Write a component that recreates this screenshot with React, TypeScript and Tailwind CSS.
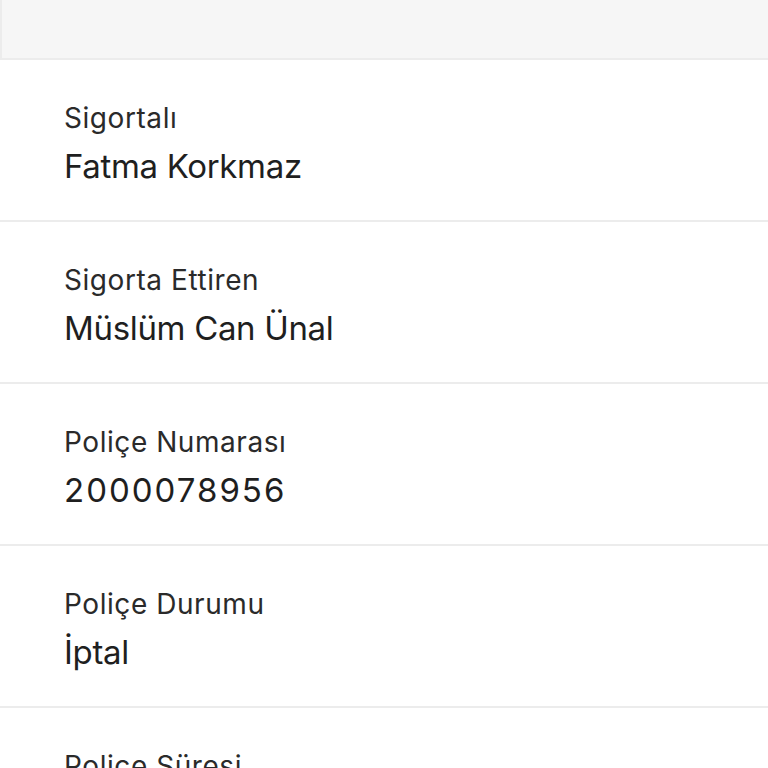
const rows = [
  { label: "Sigortalı", value: "Fatma Korkmaz", digits: false },
  { label: "Sigorta Ettiren", value: "Müslüm Can Ünal", digits: false },
  { label: "Poliçe Numarası", value: "2000078956", digits: true },
  { label: "Poliçe Durumu", value: "İptal", digits: false },
  { label: "Poliçe Süresi", value: "1 Yıl", digits: false },
];

export default function App() {
  return (
    <div
      className="h-[768px] w-[768px] overflow-hidden bg-white text-[#1f1f1f]"
      style={{ fontFamily: "Inter, 'Noto Sans', sans-serif" }}
    >
      <div className="h-[60px] border-b-2 border-l-2 border-[#ececec] bg-[#f6f6f6]" />
      {rows.map((row) => (
        <div
          key={row.label}
          className="flex h-[162px] flex-col border-b-2 border-[#ececec] pl-16 pt-[36px]"
        >
          <div className="text-[28px] leading-[44px] tracking-[0.02em] text-[#2a2a2a]">
            {row.label}
          </div>
          <div
            className={
              row.digits
                ? "mt-[4px] text-[33px] leading-[44px] tracking-[2px]"
                : "mt-[4px] text-[33px] leading-[44px] tracking-[-0.01em]"
            }
          >
            {row.value}
          </div>
        </div>
      ))}
    </div>
  );
}
